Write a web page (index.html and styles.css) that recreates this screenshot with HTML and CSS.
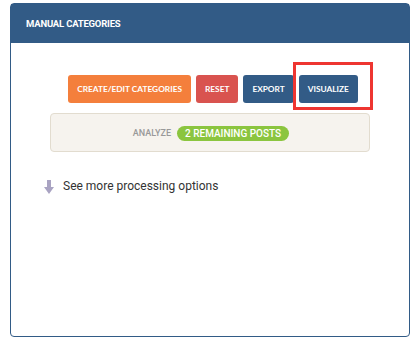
FILE: index.html
```html
<!DOCTYPE html>
<html lang="en">

<head>
    <meta charset="UTF-8" />
    <meta name="viewport" content="width=device-width, initial-scale=1.0" />
    <title>Manual Categories</title>
    <link rel="stylesheet" href="styles.css">
</head>

<body>
    <div class="panel">
        <div class="panel-header">
            <h2>MANUAL CATEGORIES</h2>
        </div>

        <div class="panel-body">
            <div class="actions">
                <button class="btn btn-orange">CREATE/EDIT CATEGORIES</button>
                <button class="btn btn-red">RESET</button>
                <button class="btn btn-blue">EXPORT</button>
                <div class="highlight-wrap">
                    <button class="btn btn-blue">VISUALIZE</button>
                    <span class="highlight"></span>
                </div>
            </div>

            <div class="analyze-box">
                <span class="analyze-label">ANALYZE</span>
                <span class="pill">2 REMAINING POSTS</span>
            </div>

            <a class="more-options" href="#">
                <svg class="arrow" width="10" height="14" viewBox="0 0 10 14">
                    <path d="M3 0 H7 V7 H10 L5 14 L0 7 H3 Z" fill="#a9a3c2" />
                </svg>
                See more processing options
            </a>
        </div>
    </div>
</body>

</html>
```

FILE: styles.css
```css
/* Base Styles */
body {
    margin: 0;
    background-color: #fff;
    font-family: Roboto, "Liberation Sans", sans-serif;
}

.panel {
    margin: 3px 10px 0;
    height: 334px;
    border: 1.5px solid #325b86;
    border-radius: 4px;
    box-sizing: border-box;
    display: flex;
    flex-direction: column;
}

.panel-header {
    height: 39px;
    background-color: #325b86;
    display: flex;
    align-items: center;
    padding-left: 15px;
}

.panel-header h2 {
    margin: 0;
    color: #fff;
    font-size: 9.5px;
    font-weight: 700;
    letter-spacing: -0.2px;
}

.panel-body {
    padding: 32px 39px 0;
}

/* Buttons */
.actions {
    display: flex;
    justify-content: center;
    gap: 5px;
    padding-left: 6px;
}

.btn {
    height: 28px;
    padding: 0 9px;
    border: none;
    border-radius: 3px;
    color: #fff;
    font-family: Lato, "Liberation Sans", sans-serif;
    font-size: 8.3px;
    font-weight: 700;
    cursor: pointer;
}

.btn-orange {
    background-color: #f47f3c;
}

.btn-red {
    background-color: #d9534f;
}

.btn-blue {
    background-color: #325b86;
}

.highlight-wrap {
    position: relative;
}

.highlight {
    position: absolute;
    left: -6px;
    top: -13px;
    right: -15px;
    bottom: -7px;
    border: 3px solid #ee3531;
    pointer-events: none;
}

/* Analyze row */
.analyze-box {
    margin-top: 10px;
    height: 39px;
    background-color: #f6f3ee;
    border: 1px solid #e2dccf;
    border-radius: 4px;
    box-sizing: border-box;
    display: flex;
    justify-content: center;
    align-items: center;
    gap: 6px;
    padding: 1px 0 0 2px;
}

.analyze-label {
    color: #999;
    font-size: 9px;
    font-weight: 500;
}

.pill {
    background-color: #8bc53f;
    color: #fff;
    font-size: 10px;
    font-weight: 500;
    padding: 1px 8px;
    border-radius: 10px;
    line-height: 13px;
}

/* More options link */
.more-options {
    display: flex;
    align-items: center;
    gap: 9px;
    margin: 25px 0 0 -6px;
    color: #333;
    font-size: 12px;
    text-decoration: none;
}

.arrow {
    margin-top: 3px;
}
```
